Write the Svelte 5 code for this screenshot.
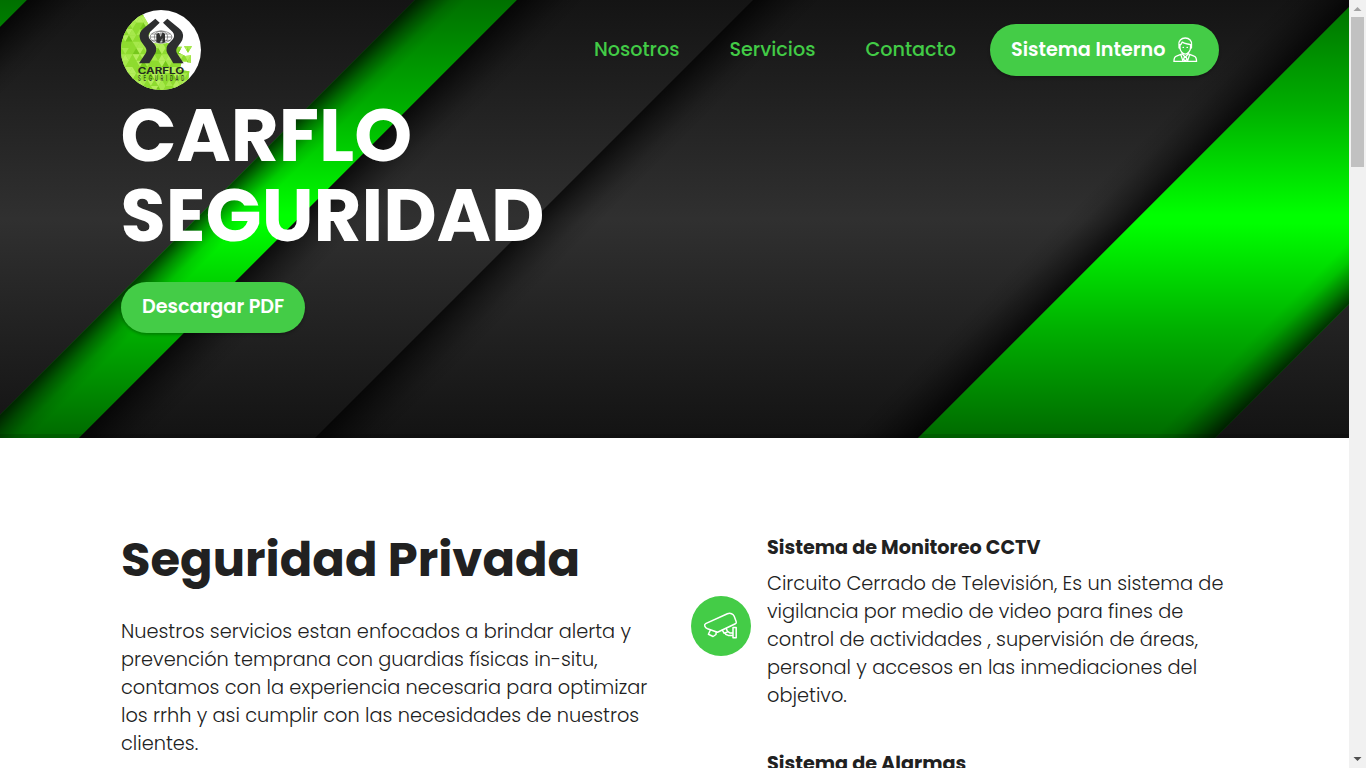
<script>
  const links = ['Nosotros', 'Servicios', 'Contacto'];
  const title = ['CARFLO', 'SEGURIDAD'];
  const intro = [
    'Nuestros servicios estan enfocados a brindar alerta y',
    'prevención temprana con guardias físicas in-situ,',
    'contamos con la experiencia necesaria para optimizar',
    'los rrhh y asi cumplir con las necesidades de nuestros',
    'clientes.'
  ];
  const cctv = [
    'Circuito Cerrado de Televisión, Es un sistema de',
    'vigilancia por medio de video para fines de',
    'control de actividades , supervisión de áreas,',
    'personal y accesos en las inmediaciones del',
    'objetivo.'
  ];

  // Small triangles of the emblem's mosaic
  const shades = ['#8edb2f', '#a6e84b', '#76c81c', '#b4ee5c', '#8edb2f', '#8edb2f'];
  const mosaic = [];
  for (let r = 0; r < 13; r++) {
    for (let c = 0; c < 24; c++) {
      const x = 24 + c * 11;
      const y = 30 + r * 19;
      const up = (r + c) % 2 === 0;
      mosaic.push({
        d: up ? `${x},${y + 19} ${x + 11},${y} ${x + 22},${y + 19}` : `${x},${y} ${x + 22},${y} ${x + 11},${y + 19}`,
        fill: shades[(r * 7 + c * 5 + ((r * c) % 4)) % 6]
      });
    }
  }
</script>

<div class="window">
  <div class="page">
    <header class="hero">
      <svg class="backdrop" viewBox="0 0 1349 438" preserveAspectRatio="none" aria-hidden="true">
        <defs>
          <linearGradient id="dark" x1="0" y1="0" x2="0" y2="1">
            <stop offset="0" stop-color="#141414" /><stop offset=".5" stop-color="#303030" /><stop offset="1" stop-color="#131313" />
          </linearGradient>
          <linearGradient id="green" gradientUnits="userSpaceOnUse" x1="0" y1="0" x2="0" y2="438">
            <stop offset="0" stop-color="#007000" /><stop offset=".25" stop-color="#00b000" /><stop offset=".49" stop-color="#00ff00" />
            <stop offset=".51" stop-color="#00ff00" /><stop offset=".75" stop-color="#00b000" /><stop offset="1" stop-color="#006a00" />
          </linearGradient>
          {#each [['s0', 27, 70], ['s1', 415, 52], ['s2', 517, 70], ['s3', 753, 70], ['s4', 1356, -74], ['s5', 1653, -62]] as [id, a, d]}
            <linearGradient {id} gradientUnits="userSpaceOnUse" x1={a} y1="0" x2={a + d / 2} y2={d / 2}>
              <stop offset="0" stop-color="#000" stop-opacity=".72" /><stop offset=".35" stop-color="#000" stop-opacity=".38" />
              <stop offset=".7" stop-color="#000" stop-opacity=".1" /><stop offset="1" stop-color="#000" stop-opacity="0" />
            </linearGradient>
          {/each}
        </defs>
        <rect width="1349" height="438" fill="url(#dark)" />
        <path d="M0 0H27L0 27Z" fill="url(#green)" />
        <path d="M27 0H102L0 102V27Z" fill="url(#s0)" />
        <path d="M415 0H517L79 438H-23Z" fill="url(#green)" />
        <path d="M415 0H490L52 438H-23Z" fill="url(#s1)" />
        <path d="M517 0H602L164 438H79Z" fill="url(#s2)" />
        <path d="M753 0H838L400 438H315Z" fill="url(#s3)" />
        <path d="M1266 0H1356L918 438H828Z" fill="url(#s4)" />
        <path d="M1356 0H1653L1215 438H918Z" fill="url(#green)" />
        <path d="M1568 0H1653L1215 438H1130Z" fill="url(#s5)" />
        <rect y="434" width="1349" height="4" fill="#000" opacity=".12" />
      </svg>

      <nav>
        <svg class="logo" viewBox="33 30 240 240" role="img" aria-label="Carflo">
          <defs>
            <clipPath id="disc"><circle cx="153" cy="150" r="120" /></clipPath>
            <clipPath id="patch"><path d="M20 20L96 40L115 72L126 130H176L190 140H216L206 158L226 168L243 166L243 188L216 184L208 210L238 214L230 280H20ZM222 139H246L234 158Z" /></clipPath>
          </defs>
          <g clip-path="url(#disc)">
            <rect x="33" y="30" width="240" height="240" fill="#fff" />
            <g clip-path="url(#patch)">
              <rect x="33" y="30" width="240" height="240" fill="#8edb2f" />
              {#each mosaic as t}<polygon points={t.d} fill={t.fill} />{/each}
            </g>
            <ellipse cx="153" cy="111" rx="37" ry="20" fill="#fff" />
          </g>
          <g fill="none" stroke="#444" stroke-width="1.6">
            <ellipse cx="153" cy="111" rx="33" ry="18" /><ellipse cx="153" cy="111" rx="20" ry="18" />
            <path d="M120 111H186M125 102H181M125 121H181M153 93V129" />
          </g>
          <path d="M139 126V102L147 98L152 111L158 96L165 102V126L157 130V115L148 130Z" fill="#303030" />
          <g fill="#2d2e2f">
            <path d="M136 56L149 68L120 96Q112 106 119 117L133 132Q143 144 136 160L118 190H87L107 160Q112 150 106 142L95 127Q85 112 91 97Q94 90 102 84Z" />
            <path d="M172 56L159 68L188 96Q196 106 189 117L175 132Q165 144 172 160L190 190H221L201 160Q196 150 202 142L213 127Q223 112 217 97Q214 90 206 84Z" />
          </g>
          <text x="83" y="221" textLength="140" lengthAdjust="spacingAndGlyphs" class="brand">CARFLO</text>
          <text transform="translate(84 244) scale(.52 1)" textLength="267" class="sub">SEGURIDAD</text>
        </svg>
        <div class="links">
          {#each links as l}<a href="#top">{l}</a>{/each}
          <a class="button" href="#top">
            Sistema Interno
            <svg class="agent" viewBox="0 0 26 26" preserveAspectRatio="none" fill="none" stroke="#fff" stroke-width="1.4" stroke-linejoin="round" stroke-linecap="round" aria-hidden="true">
              <path d="M6.3 8.2C5.6 4 8.7 1 13 1s7.4 3 6.7 7.2M7.4 7.5V11c0 3.6 3.2 6.5 5.6 6.5s5.6-2.9 5.6-6.5V7.5M6.4 8v3l1 .6M19.6 8v3l-1 .6M7.8 8c1-.5 1.5-1.4 2-2.8 2 2 5 1.7 8.5 2.5M10.7 10.6h.4M14.9 10.6h.4" />
              <path d="M9.7 17.1L3.6 19.4C1.8 20 1 22 1 25h24c0-3-.8-5-2.6-5.6l-6.1-2.3M9.7 17.1L13 20.6l3.3-3.5M8.4 18.2l2.2 6.4M17.6 18.2l-2.2 6.4M12 20.6l-.8 2 1.8 1.8 1.8-1.8-.8-2" />
            </svg>
          </a>
        </div>
      </nav>
      <h1>{#each title as l}<span class="row">{l}</span>{/each}</h1>
      <a class="button download" href="#top">Descargar PDF</a>
    </header>

    <main>
      <section class="about">
        <h2>Seguridad Privada</h2>
        <p>{#each intro as l}<span class="row">{l}</span>{/each}</p>
      </section>
      <section class="services">
        <article>
          <div class="badge">
            <svg viewBox="0 0 60 60" fill="none" stroke="#fff" stroke-width="1.5" stroke-linejoin="round" stroke-linecap="round" aria-hidden="true">
              <path d="M14.6 27.6L36.4 17.8c3-1.3 5.9.2 6.8 2.4l2 5.6c.3.9 0 1.7-.8 2L26.5 36.2l-10-3.4c-2.7-1-3.8-4.2-1.9-5.2Z" />
              <path d="M19.4 34L17.4 38.3l4.7 2.2 2.9-2 .2-2.6M31.3 34.2l1.9 3.1 3.4-1.4-1.2-3.2M36.6 35.4l2.6 1.7H42M34.6 38.2l2.6 1.2H42M42 31.4h3.2v10.4H42Z" />
            </svg>
          </div>
          <div>
            <h3>Sistema de Monitoreo CCTV</h3>
            <p>{#each cctv as l}<span class="row">{l}</span>{/each}</p>
          </div>
        </article>
        <article class="next">
          <h3>Sistema de Alarmas</h3>
        </article>
      </section>
    </main>
  </div>
  <div class="scrollbar" aria-hidden="true">
    <svg width="17" height="17" viewBox="0 0 17 17"><path d="M4.5 11L8.5 7L12.5 11Z" fill="#a3a3a3" /></svg>
    <div class="thumb"></div>
    <svg class="down" width="17" height="17" viewBox="0 0 17 17"><path d="M4.5 6L8.5 10L12.5 6Z" fill="#505050" /></svg>
  </div>
</div>

<style>
  :global(body) { margin: 0; background: #fff; }
  .window { display: flex; height: 768px; overflow: hidden; font-family: Poppins, Inter, sans-serif; color: #212121; }
  .page { width: 1349px; }
  .row { display: block; white-space: nowrap; }
  h1, h2, h3, p { margin: 0; white-space: nowrap; }
  a { text-decoration: none; color: inherit; white-space: nowrap; }
  .hero { position: relative; box-sizing: border-box; height: 438px; padding: 0 130px 0 121px; overflow: hidden; }
  .backdrop { position: absolute; inset: 0; width: 100%; height: 100%; }
  nav { position: relative; display: flex; align-items: center; justify-content: space-between; height: 100px; }
  .logo { width: 80px; height: 80px; }
  .brand { font: 700 26px Inter, sans-serif; fill: #242b20; }
  .sub { font: 500 24px Inter, sans-serif; fill: #2c3a20; }
  .links { display: flex; align-items: center; gap: 50px; color: #42cb46; font-size: 19.2px; font-weight: 500; line-height: 30px; }
  .button { box-sizing: border-box; display: flex; align-items: center; height: 52px; padding: 0 21px; border-radius: 26px; background: #44cc47; color: #fff; font-size: 19.2px; font-weight: 600; line-height: 30px; box-shadow: 0 2px 3px rgba(0, 0, 0, .25); }
  .links .button { width: 229px; margin-left: -16px; padding-bottom: 1px; }
  .agent { flex: none; width: 24.5px; height: 25.5px; margin-left: 8px; }
  h1 { position: relative; height: 160px; color: #fff; font-size: 73.6px; line-height: 80px; font-weight: 700; margin-top: -4px; margin-left: -.5px; }
  .download { position: relative; width: 184px; height: 51px; margin-top: 26px; padding-bottom: 2px; }
  main { display: flex; padding-left: 121px; }
  .about { width: 570px; padding-top: 92px; }
  h2 { font-size: 48px; line-height: 60px; font-weight: 700; }
  p { font-size: 19.34px; line-height: 28px; font-weight: 300; }
  .about p { padding-top: 28px; }
  .services { padding-top: 95px; }
  article { display: flex; align-items: center; gap: 16px; }
  h3 { font-size: 19.2px; line-height: 30px; font-weight: 700; }
  article p { padding-top: 7px; }
  .badge { display: flex; width: 60px; height: 60px; margin-top: 9px; border-radius: 50%; background: #44cc47; }
  .next { margin-top: 39px; padding-left: 76px; }
  .scrollbar { display: flex; flex-direction: column; width: 17px; background: #f1f1f1; }
  .thumb { width: 13px; height: 150px; margin: 0 2px; background: #c1c1c1; }
  .down { margin-top: auto; }
</style>
